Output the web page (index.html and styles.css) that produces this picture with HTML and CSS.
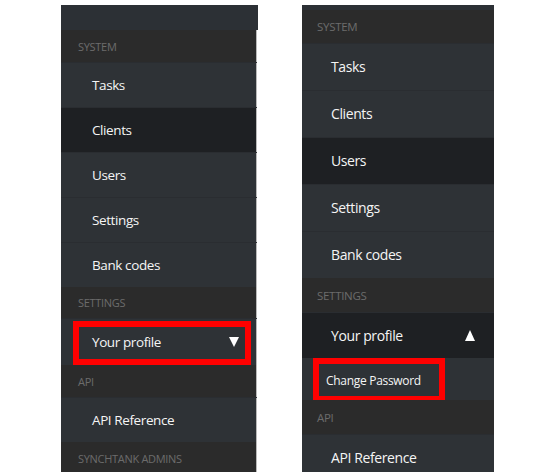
FILE: index.html
```html
<!DOCTYPE html>
<html>
<head>
<meta charset="utf-8">
<link rel="stylesheet" href="styles.css">
</head>
<body>
<div class="page">
  <nav class="sidebar sidebar-left">
    <div class="topbar"></div>
    <div class="section">System</div>
    <div class="item">Tasks</div>
    <div class="item active">Clients</div>
    <div class="item">Users</div>
    <div class="item">Settings</div>
    <div class="item">Bank codes</div>
    <div class="section section-short">Settings</div>
    <div class="item item-profile">
      <div class="highlight profile-box">
        <span>Your profile</span>
        <svg class="caret" width="10" height="10" viewBox="0 0 10 10"><polygon points="0,0 10,0 5,10" fill="#ffffff"/></svg>
      </div>
    </div>
    <div class="section">API</div>
    <div class="item">API Reference</div>
    <div class="section">Synchtank Admins</div>
  </nav>

  <nav class="sidebar sidebar-right">
    <div class="topbar"></div>
    <div class="section">System</div>
    <div class="item">Tasks</div>
    <div class="item">Clients</div>
    <div class="item active">Users</div>
    <div class="item">Settings</div>
    <div class="item">Bank codes</div>
    <div class="section">Settings</div>
    <div class="item item-open active">
      <span>Your profile</span>
      <svg class="caret" width="10" height="11" viewBox="0 0 10 11"><polygon points="5,0 10,11 0,11" fill="#ffffff"/></svg>
    </div>
    <div class="subitem">
      <div class="highlight sub-box">Change Password</div>
    </div>
    <div class="section">API</div>
    <div class="item">API Reference</div>
  </nav>
</div>
</body>
</html>
```

FILE: styles.css
```css
html, body {
  margin: 0;
  padding: 0;
  background: #ffffff;
}

body {
  font-family: "Open Sans", "Noto Sans", sans-serif;
  overflow: hidden;
  height: 472px;
}

.page {
  display: flex;
  align-items: flex-start;
  gap: 45px;
  padding: 5px 0 0 61px;
}

.sidebar {
  display: flex;
  flex-direction: column;
  background: #2e3236;
  color: #f5f5f5;
}

.topbar {
  background: #2c3035;
}

.section {
  display: flex;
  align-items: center;
  background: #2b2b2b;
  color: #6b6b6b;
  font-size: 11px;
  text-transform: uppercase;
  letter-spacing: -0.3px;
}

.item {
  display: flex;
  align-items: center;
  background: #2e3236;
  font-size: 13.5px;
  letter-spacing: -0.4px;
  border-top: 1px solid #2a2d31;
  box-sizing: border-box;
  padding-bottom: 1px;
}

.item.active {
  background: #1e2023;
}

.highlight {
  border: 6px solid #ff0000;
  box-sizing: border-box;
  background: #2e3236;
}

/* left panel */
.sidebar-left {
  width: 196px;
  box-shadow: inset -1px 0 0 #b9b9b9;
}

.sidebar-left .topbar {
  height: 25px;
  margin-right: -1px;
}

.sidebar-left .section {
  height: 32px;
  padding-left: 17px;
  box-shadow: inset -1px 0 0 #b9b9b9;
}

.sidebar-left .section-short {
  height: 31px;
}

.sidebar-left .item {
  height: 45px;
  padding-left: 31px;
  box-shadow: inset -1px 0 0 #b9b9b9;
}

.sidebar-left .item-profile {
  height: 47px;
  padding: 2px 6px 0 12px;
  align-items: stretch;
}

.profile-box {
  flex: 1;
  display: flex;
  align-items: center;
  justify-content: space-between;
  padding: 0 6px 3px 13px;
}

/* right panel */
.sidebar-right {
  width: 192px;
}

.sidebar-right .topbar {
  height: 5px;
}

.sidebar-right .section {
  height: 34px;
  padding-left: 15px;
  font-size: 11.5px;
}

.sidebar-right .section:nth-child(2) {
  height: 33px;
}

.sidebar-right .item {
  height: 47px;
  padding-left: 29px;
  font-size: 14px;
}

.sidebar-right .item-open {
  height: 46px;
  justify-content: space-between;
  padding-right: 19px;
}

.subitem {
  height: 42px;
  display: flex;
  padding-left: 11px;
  background: #2e3236;
}

.sub-box {
  width: 132px;
  height: 44px;
  display: flex;
  align-items: center;
  padding-left: 7px;
  font-size: 12px;
  letter-spacing: -0.3px;
}

.caret {
  display: block;
}
```
